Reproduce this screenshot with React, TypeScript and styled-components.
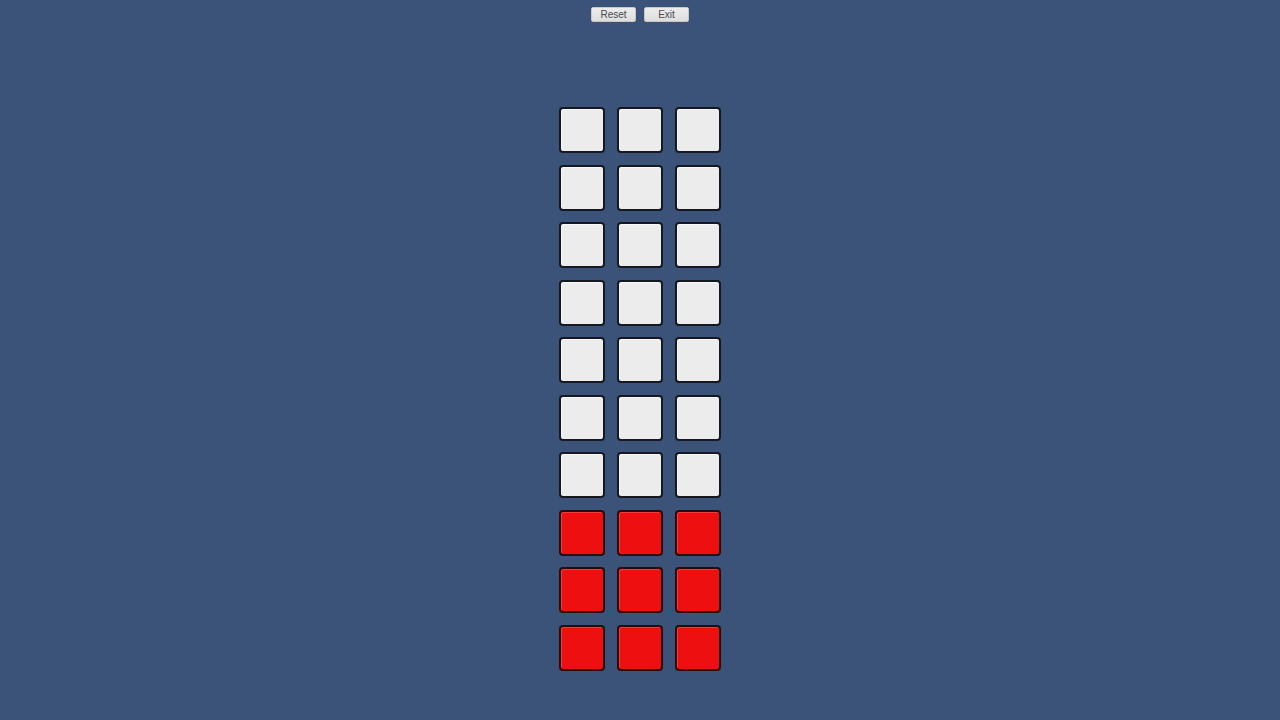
import React from "react";
import styled, { createGlobalStyle } from "styled-components";

const Global = createGlobalStyle`
  html, body { margin: 0; padding: 0; background: #3b5378; }
  body { font-family: "Liberation Sans", Arial, sans-serif; }
  #root { min-height: 100vh; }
`;

const Page = styled.div`
  box-sizing: border-box;
  width: 1280px;
  height: 720px;
  display: flex;
  flex-direction: column;
  align-items: center;
  background: #3b5378;
  overflow: hidden;
`;

const Toolbar = styled.div`
  display: flex;
  gap: 8px;
  padding-top: 7px;
`;

const Button = styled.button`
  width: 45px;
  height: 15px;
  padding: 0;
  border: 1px solid #c8c8c8;
  border-radius: 2px;
  background: linear-gradient(#ececec, #dedede);
  color: #4a4a4a;
  font-family: "Liberation Sans", Arial, sans-serif;
  font-size: 10px;
  line-height: 13px;
  cursor: pointer;
`;

const Grid = styled.div`
  display: grid;
  grid-template-columns: repeat(3, 46px);
  grid-auto-rows: 46px;
  column-gap: 12px;
  row-gap: 11.5px;
  margin-top: 85px;
`;

const Tile = styled.div<{ $red: boolean }>`
  box-sizing: border-box;
  border: 2px solid ${(p) => (p.$red ? "#2a0a0a" : "#151820")};
  border-radius: 4px;
  background: ${(p) => (p.$red ? "#ee1010" : "#ececec")};
  box-shadow: inset 1px 1px 0 ${(p) => (p.$red ? "#f43a3a" : "#f8f8f8")};
`;

export default function App() {
  const tiles = Array.from({ length: 30 }, (_, i) => i >= 21);
  return (
    <Page>
      <Global />
      <Toolbar>
        <Button>Reset</Button>
        <Button>Exit</Button>
      </Toolbar>
      <Grid>
        {tiles.map((red, i) => (
          <Tile key={i} $red={red} />
        ))}
      </Grid>
    </Page>
  );
}
